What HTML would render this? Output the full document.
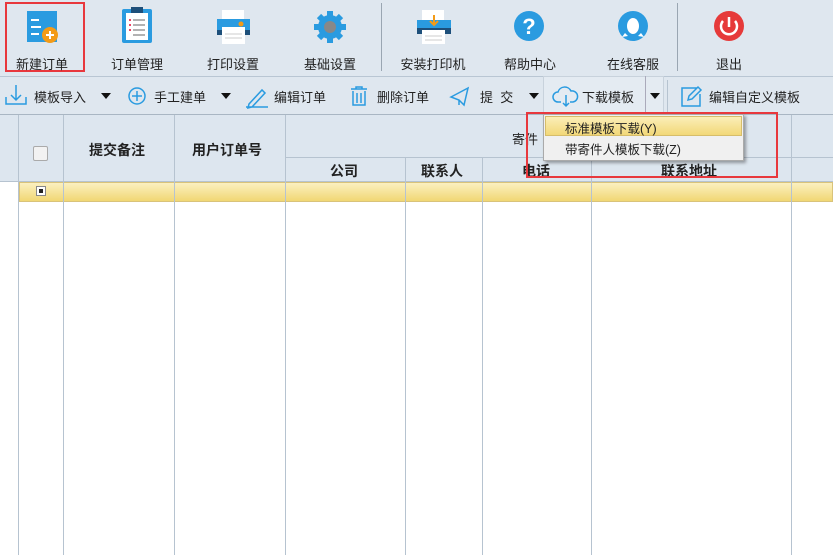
<!DOCTYPE html><html><head><meta charset="utf-8"><style>
body{margin:0;width:833px;height:555px;overflow:hidden;background:#fff;font-family:"Liberation Sans","Noto Sans CJK SC",sans-serif;font-size:13px;color:#222;position:relative}
.a{position:absolute}
.top{left:0;top:0;width:833px;height:76px;background:#dfe7ef;border-bottom:1px solid #b9c6d3}
.lab{top:54px;width:100px;text-align:center;font-size:13px}
.bar2{left:0;top:77px;width:833px;height:37px;background:#dfe7ef;border-bottom:1px solid #a9b6c3}
.t2{top:87px;font-size:13px}
.hdr{left:0;top:115px;width:833px;height:67px;background:#dde6ef}
.v{width:1px;background:#b6c3d0}
.hb{font-weight:bold;font-size:14px}
.tri{width:0;height:0;border-left:5px solid transparent;border-right:5px solid transparent;border-top:6px solid #111}
</style></head><body>
<div class="a top"></div>
<div class="a" style="left:5px;top:2px;width:80px;height:70px;border:2px solid #e8383d;box-sizing:border-box"></div>
<!-- icons -->
<svg class="a" style="left:0;top:0" width="833" height="50">
<rect x="27" y="11" width="30" height="31" fill="#2a9be0"/><g stroke="#fff" stroke-width="2"><line x1="31" y1="20" x2="39" y2="20"/><line x1="31" y1="27" x2="41" y2="27"/><line x1="31" y1="34" x2="39" y2="34"/></g><circle cx="50" cy="35" r="8" fill="#f39b17"/><path d="M46 35h8M50 31v8" stroke="#fff" stroke-width="2"/>
<rect x="122" y="9" width="30" height="34" rx="2" fill="#2a9be0"/><rect x="126" y="13" width="22" height="27" fill="#fff"/><rect x="131" y="7" width="12" height="6" fill="#1d4f7a"/><g stroke="#999" stroke-width="1.5"><line x1="133" y1="20" x2="145" y2="20"/><line x1="133" y1="25" x2="145" y2="25"/><line x1="133" y1="30" x2="145" y2="30"/><line x1="133" y1="35" x2="145" y2="35"/></g><g fill="#e46"><rect x="129" y="19" width="2" height="2"/><rect x="129" y="24" width="2" height="2"/><rect x="129" y="29" width="2" height="2"/></g>
<rect x="222" y="10" width="22" height="10" fill="#fff"/><rect x="217" y="19" width="33" height="14" fill="#2a9be0"/><rect x="217" y="30" width="33" height="5" fill="#1d4f7a"/><rect x="222" y="27" width="23" height="17" fill="#fff"/><circle cx="241" cy="24" r="2.5" fill="#f39b17"/><g stroke="#ccc"><line x1="225" y1="34" x2="242" y2="34"/><line x1="225" y1="38" x2="242" y2="38"/></g>
<circle cx="330" cy="27" r="12" fill="#2a9be0"/><g stroke="#2a9be0" stroke-width="6"><line x1="330" y1="11" x2="330" y2="43"/><line x1="314" y1="27" x2="346" y2="27"/><line x1="319" y1="16" x2="341" y2="38"/><line x1="341" y1="16" x2="319" y2="38"/></g><circle cx="330" cy="27" r="6" fill="#888"/>
<rect x="422" y="10" width="22" height="12" fill="#fff"/><rect x="417" y="20" width="34" height="10" fill="#2a9be0"/><rect x="417" y="28" width="34" height="6" fill="#1d4f7a"/><rect x="422" y="30" width="23" height="14" fill="#fff"/><path d="M434 15v10M430 21l4 4 4-4" stroke="#f39b17" stroke-width="2" fill="none"/><g stroke="#ccc"><line x1="425" y1="36" x2="442" y2="36"/><line x1="425" y1="40" x2="442" y2="40"/></g>
<circle cx="529" cy="26" r="15" fill="#2a9be0"/><text x="529" y="34" text-anchor="middle" fill="#fff" font-size="22" font-weight="bold" font-family="Liberation Sans">?</text>
<circle cx="633" cy="26" r="15" fill="#2a9be0"/><ellipse cx="633" cy="26" rx="6" ry="8" fill="#fff"/><path d="M625 33l-3 4 6-1M641 33l3 4-6-1" fill="#fff"/>
<circle cx="729" cy="26" r="15" fill="#e63a3a"/><path d="M723 21a8 8 0 1 0 12 0" stroke="#fff" stroke-width="2.5" fill="none"/><line x1="729" y1="17" x2="729" y2="27" stroke="#fff" stroke-width="2.5"/>
</svg>
<div class="a" style="left:381px;top:3px;width:1px;height:68px;background:#9aa6b2"></div>
<div class="a" style="left:677px;top:3px;width:1px;height:68px;background:#9aa6b2"></div>
<div class="a lab" style="left:-8px">新建订单</div>
<div class="a lab" style="left:87px">订单管理</div>
<div class="a lab" style="left:183px">打印设置</div>
<div class="a lab" style="left:280px">基础设置</div>
<div class="a lab" style="left:383px">安装打印机</div>
<div class="a lab" style="left:480px">帮助中心</div>
<div class="a lab" style="left:583px">在线客服</div>
<div class="a lab" style="left:679px">退出</div>
<div class="a bar2"></div>
<div class="a" style="left:543px;top:76px;width:121px;height:37px;border:1px solid #c8d2dc;border-bottom:none;background:#e4ebf2;box-sizing:border-box"></div>
<div class="a" style="left:645px;top:76px;width:1px;height:37px;background:#aab"></div>
<div class="a" style="left:667px;top:80px;width:1px;height:32px;background:#b6c3d0"></div>
<svg class="a" style="left:0;top:77px" width="833" height="37">
<g stroke="#2a9be0" stroke-width="1.5" fill="none">
<path d="M16 8v15M11 18l5 5 5-5M6 20v7h20v-7"/>
<circle cx="137" cy="19" r="8"/><path d="M137 14v10M132 19h10"/>
<path d="M249 27l13-14 3 3-13 14-4 1zM246 30h22"/>
<path d="M351 12h16M356 12v-2h6v2M353 14v14h12v-14M357 16v10M361 16v10"/>
<path d="M451 20l17-9-4 17-5-5zM459 23v5"/>
<path d="M561 25h-3a5 5 0 0 1 0-10a7 7 0 0 1 13-1a5 5 0 0 1 2 11h-3M566 18v11M563 26l3 3 3-3"/>
<path d="M697 11h-15v18h18v-12M688 23l1-4 9-9 3 3-9 9z"/>
</g></svg>
<div class="a t2" style="left:34px">模板导入</div><div class="a tri" style="left:101px;top:93px"></div>
<div class="a t2" style="left:154px">手工建单</div><div class="a tri" style="left:221px;top:93px"></div>
<div class="a t2" style="left:274px">编辑订单</div>
<div class="a t2" style="left:377px">删除订单</div>
<div class="a t2" style="left:480px">提&nbsp; 交</div><div class="a tri" style="left:529px;top:93px"></div>
<div class="a t2" style="left:582px">下载模板</div><div class="a tri" style="left:650px;top:93px"></div>
<div class="a t2" style="left:709px">编辑自定义模板</div>
<div class="a hdr"></div>
<div class="a" style="left:285px;top:157px;width:548px;height:1px;background:#b6c3d0"></div>
<div class="a" style="left:0;top:181px;width:833px;height:1px;background:#b6c3d0"></div>
<div class="a" style="left:19px;top:182px;width:814px;height:20px;background:linear-gradient(#fbf0c0,#f1d774);border:1px solid #d9c37a;box-sizing:border-box"></div>
<div class="a" style="left:36px;top:186px;width:10px;height:10px;border:1px solid #888;background:#fff;box-sizing:border-box"><div style="margin:2px;width:4px;height:4px;background:#222"></div></div>
<div class="a" style="left:33px;top:146px;width:13px;height:13px;border:1px solid #aaa;border-radius:2px;background:#f2f2f2"></div>
<div class="a v" style="left:18px;top:115px;height:440px"></div>
<div class="a v" style="left:63px;top:115px;height:440px"></div>
<div class="a v" style="left:174px;top:115px;height:440px"></div>
<div class="a v" style="left:285px;top:115px;height:440px"></div>
<div class="a v" style="left:405px;top:157px;height:398px"></div>
<div class="a v" style="left:482px;top:157px;height:398px"></div>
<div class="a v" style="left:591px;top:157px;height:398px"></div>
<div class="a v" style="left:791px;top:115px;height:440px"></div>
<div class="a hb" style="left:89px;top:140px">提交备注</div>
<div class="a hb" style="left:192px;top:140px">用户订单号</div>
<div class="a" style="left:512px;top:129px">寄件</div>
<div class="a hb" style="left:330px;top:161px">公司</div>
<div class="a hb" style="left:421px;top:161px">联系人</div>
<div class="a hb" style="left:522px;top:161px">电话</div>
<div class="a hb" style="left:661px;top:161px">联系地址</div>
<div class="a" style="left:543px;top:114px;width:201px;height:47px;background:#f0f0f0;border:1px solid #aaa;box-shadow:2px 2px 3px rgba(0,0,0,.35);box-sizing:border-box"></div>
<div class="a" style="left:545px;top:116px;width:197px;height:20px;background:linear-gradient(#fbeeb8,#f2d878);border:1px solid #d6bd6a;box-sizing:border-box"></div>
<div class="a" style="left:565px;top:118px;font-size:12.5px">标准模板下载(Y)</div>
<div class="a" style="left:565px;top:139px;font-size:12.5px">带寄件人模板下载(Z)</div>
<div class="a" style="left:526px;top:112px;width:252px;height:66px;border:2px solid #e8383d;box-sizing:border-box"></div>
</body></html>
